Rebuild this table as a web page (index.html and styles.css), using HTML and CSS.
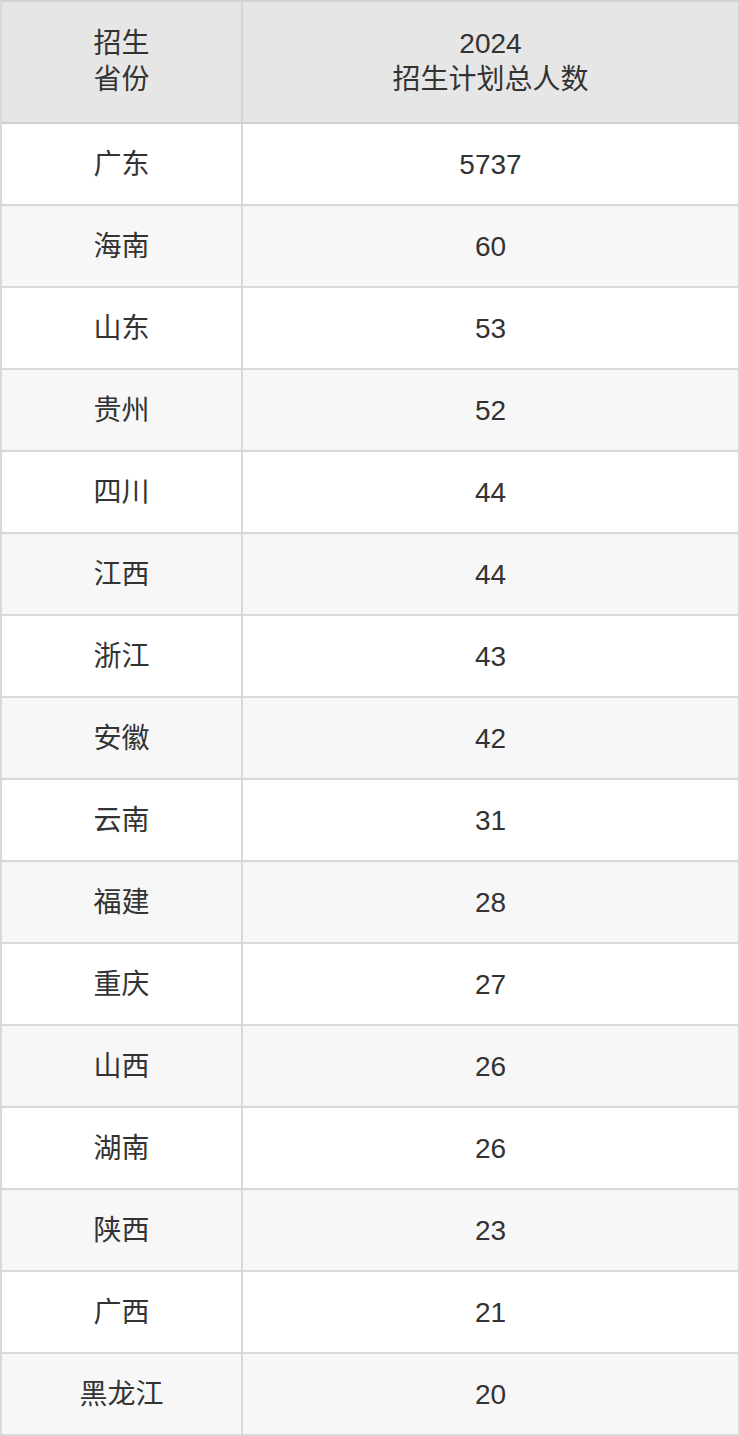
FILE: index.html
```html
<!DOCTYPE html>
<html lang="zh-CN">
<head>
<meta charset="utf-8">
<title>2024招生计划</title>
<link rel="stylesheet" href="styles.css">
</head>
<body>
<table class="plan">
  <thead>
    <tr>
      <th class="col-prov">招生<br>省份</th>
      <th class="col-num">2024<br>招生计划总人数</th>
    </tr>
  </thead>
  <tbody>
    <tr><td>广东</td><td>5737</td></tr>
    <tr><td>海南</td><td>60</td></tr>
    <tr><td>山东</td><td>53</td></tr>
    <tr><td>贵州</td><td>52</td></tr>
    <tr><td>四川</td><td>44</td></tr>
    <tr><td>江西</td><td>44</td></tr>
    <tr><td>浙江</td><td>43</td></tr>
    <tr><td>安徽</td><td>42</td></tr>
    <tr><td>云南</td><td>31</td></tr>
    <tr><td>福建</td><td>28</td></tr>
    <tr><td>重庆</td><td>27</td></tr>
    <tr><td>山西</td><td>26</td></tr>
    <tr><td>湖南</td><td>26</td></tr>
    <tr><td>陕西</td><td>23</td></tr>
    <tr><td>广西</td><td>21</td></tr>
    <tr><td>黑龙江</td><td>20</td></tr>
  </tbody>
</table>
</body>
</html>
```

FILE: styles.css
```css
html, body {
  margin: 0;
  padding: 0;
  background: #ffffff;
}

.plan {
  width: 740px;
  border-collapse: separate;
  border-spacing: 0;
  table-layout: fixed;
  border-top: 2px solid #d3d3d3;
  border-left: 2px solid #d9d9d9;
  font-family: "Liberation Sans", "Noto Sans CJK SC", sans-serif;
  font-size: 28px;
  line-height: 36px;
  color: #333333;
}

.plan th,
.plan td {
  padding: 0;
  text-align: center;
  vertical-align: middle;
  border-right: 2px solid #d9d9d9;
  border-bottom: 2px solid #d9d9d9;
  box-sizing: content-box;
}

.plan th {
  height: 120px;
  background: #e6e6e6;
  font-weight: normal;
  border-bottom-color: #d0d0d0;
  border-right-color: #d3d3d3;
}

.plan .col-prov {
  width: 239px;
}

.plan .col-num {
  width: 495px;
}

.plan td {
  height: 79px;
  padding-top: 1px;
  background: #ffffff;
}

.plan tbody tr:nth-child(even) td {
  background: #f7f7f7;
}
```
